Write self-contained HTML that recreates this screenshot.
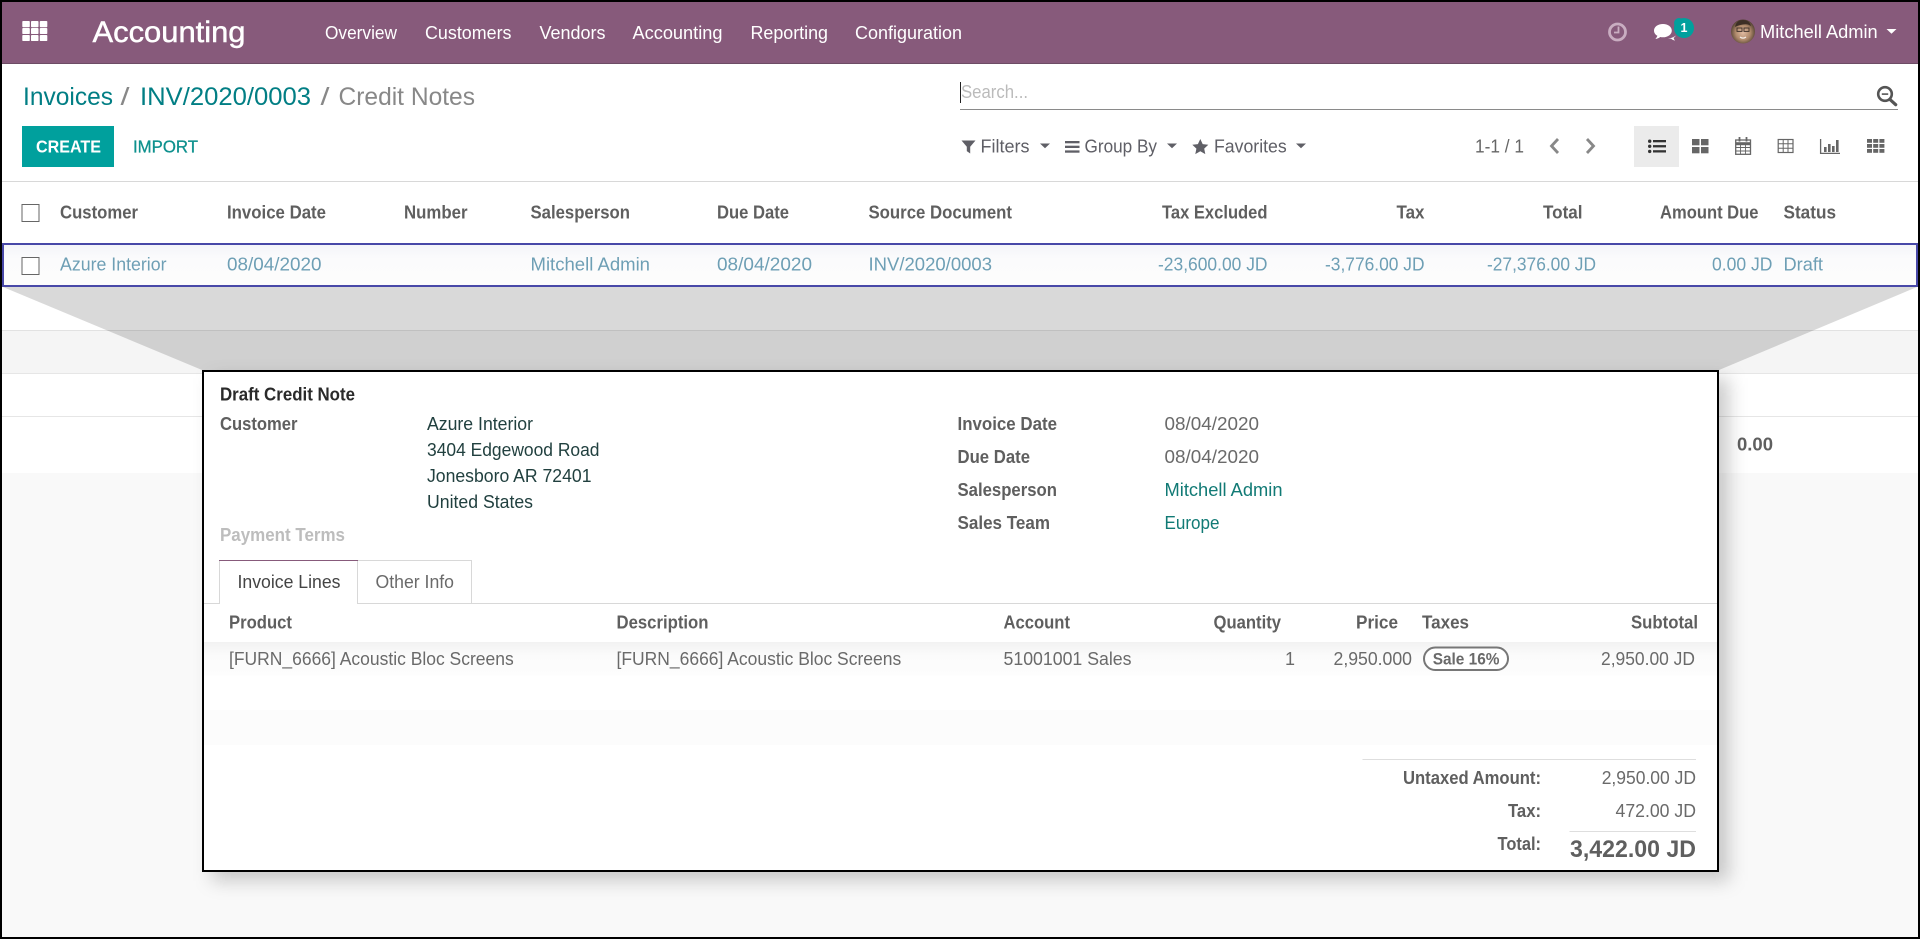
<!DOCTYPE html>
<html lang="en">
<head>
<meta charset="utf-8">
<title>Credit Notes</title>
<style>
html,body{margin:0;padding:0;width:1920px;height:939px;overflow:hidden;background:#fff}
svg{display:block;position:absolute;left:0;top:0}
text{font-family:"Liberation Sans",sans-serif;white-space:pre}
.n{font-size:18.500px;fill:#fff}
.bc{font-size:25px}
.t{fill:#017e84}
.g{fill:#888}
.h{font-size:18px;font-weight:bold;fill:#5f5f5f}
.r{font-size:18px;fill:#6e9fb5}
.l{font-size:18px;font-weight:bold;fill:#5f5f5f}
.v{font-size:18px;fill:#6a6a6a}
.d{font-size:18px;fill:#21403f}
.a{font-size:18px;fill:#117a75}
.f{font-size:18.500px;fill:#5f5f66}
</style>
</head>
<body>
<svg width="1920" height="939" viewBox="0 0 1920 939" xmlns="http://www.w3.org/2000/svg">
<defs>
<filter id="sh" x="-10%" y="-10%" width="120%" height="120%"><feGaussianBlur stdDeviation="9"/></filter>
<linearGradient id="rowg" x1="0" y1="0" x2="0" y2="1"><stop offset="0" stop-color="#f3f4f9"/><stop offset=".35" stop-color="#fbfbfc"/><stop offset="1" stop-color="#fcfcfc"/></linearGradient>
<linearGradient id="lineg" x1="0" y1="0" x2="0" y2="1"><stop offset="0" stop-color="#f2f2f2"/><stop offset=".4" stop-color="#fbfbfb"/><stop offset="1" stop-color="#fdfdfd"/></linearGradient>
<radialGradient id="av" cx=".5" cy=".55" r=".55"><stop offset="0" stop-color="#e0bba2"/><stop offset=".55" stop-color="#b08a6c"/><stop offset="1" stop-color="#4d3d2f"/></radialGradient>
</defs>

<!-- page background -->
<rect width="1920" height="939" fill="#fff"/>
<rect x="0" y="473" width="1920" height="466" fill="#f9f9f9"/>
<rect x="0" y="331" width="1920" height="42" fill="#f5f5f5"/>
<rect x="0" y="330" width="1920" height="1" fill="#e2e2e2"/>
<rect x="0" y="373" width="1920" height="1" fill="#e6e6e6"/>
<rect x="0" y="416" width="1920" height="1" fill="#e6e6e6"/>
<rect x="0" y="417" width="1920" height="56" fill="#fff"/>
<text x="1737" y="450.500" textLength="36" lengthAdjust="spacingAndGlyphs" class="l">0.00</text>

<!-- navbar -->
<rect x="0" y="2" width="1920" height="61" fill="#875a7b"/>
<rect x="0" y="63" width="1920" height="1" fill="#6d4c65"/>
<g fill="#fff">
<rect x="22.300" y="21" width="7.500" height="6.200" rx=".8"/><rect x="31" y="21" width="7.500" height="6.200" rx=".8"/><rect x="39.800" y="21" width="7.500" height="6.200" rx=".8"/>
<rect x="22.300" y="28" width="7.500" height="6" rx=".8"/><rect x="31" y="28" width="7.500" height="6" rx=".8"/><rect x="39.800" y="28" width="7.500" height="6" rx=".8"/>
<rect x="22.300" y="35" width="7.500" height="6" rx=".8"/><rect x="31" y="35" width="7.500" height="6" rx=".8"/><rect x="39.800" y="35" width="7.500" height="6" rx=".8"/>
</g>
<text x="92.500" y="42" font-size="29.500" fill="#fff" stroke="#fff" stroke-width=".45" textLength="153" lengthAdjust="spacingAndGlyphs">Accounting</text>
<text x="325" y="39" class="n" textLength="72" lengthAdjust="spacingAndGlyphs">Overview</text>
<text x="425" y="39" class="n" textLength="86.500" lengthAdjust="spacingAndGlyphs">Customers</text>
<text x="539.500" y="39" class="n" textLength="66" lengthAdjust="spacingAndGlyphs">Vendors</text>
<text x="632.500" y="39" class="n" textLength="90" lengthAdjust="spacingAndGlyphs">Accounting</text>
<text x="750.500" y="39" class="n" textLength="77.500" lengthAdjust="spacingAndGlyphs">Reporting</text>
<text x="855" y="39" class="n" textLength="107" lengthAdjust="spacingAndGlyphs">Configuration</text>
<!-- clock -->
<circle cx="1617.500" cy="32" r="8" fill="none" stroke="#c9adc1" stroke-width="2.800"/>
<path d="M1618.500 26.500v6h-4.500" fill="none" stroke="#c9adc1" stroke-width="1.800"/>
<!-- chat -->
<path d="M1663 24c-5.200 0-9 2.900-9 6.600 0 2.200 1.300 4 3.400 5.200-.4 1.300-1.200 2.400-2 3.200 1.900-.2 3.600-1 4.800-2 .9.200 1.800.3 2.800.3 5 0 8.800-3 8.800-6.700S1668 24 1663 24z" fill="#fff"/>
<path d="M1668 38.500c1 .2 2 .2 3 .1 1 .9 2.400 1.700 4 2-.7-.8-1.200-1.700-1.400-2.800 1-.6 1.800-1.400 2.300-2.300-1.800 1.500-4.800 2.800-7.900 3z" fill="#fff"/>
<circle cx="1684" cy="28" r="10" fill="#00a09d"/>
<rect x="1674" y="18" width="10" height="10" rx="5" fill="#00a09d"/>
<text x="1680.500" y="32" font-size="12.500" font-weight="bold" fill="#fff">1</text>
<!-- avatar -->
<circle cx="1743" cy="31.500" r="12" fill="url(#av)"/>
<path d="M1735 27c1-5 4-7 8-7s7 2 8 6c-3-2-5-2-8-1.500-3 .5-5 1-8 2.500z" fill="#3d2f26"/>
<rect x="1737" y="28" width="5" height="3.400" fill="none" stroke="#3a2e28" stroke-width=".9"/>
<rect x="1744" y="28" width="5" height="3.400" fill="none" stroke="#3a2e28" stroke-width=".9"/>
<path d="M1740 37c2 1.500 4 1.500 6 0" fill="none" stroke="#f5eee8" stroke-width="1.200"/>
<text x="1760" y="38" class="n" textLength="117.700" lengthAdjust="spacingAndGlyphs">Mitchell Admin</text>
<path d="M1886.500 29h10l-5 4.800z" fill="#fff"/>

<!-- breadcrumb -->
<text x="23" y="105" class="bc t" textLength="90" lengthAdjust="spacingAndGlyphs">Invoices</text>
<text x="120.500" y="105" class="bc g" textLength="9" lengthAdjust="spacingAndGlyphs">/</text>
<text x="140" y="105" class="bc t" textLength="171" lengthAdjust="spacingAndGlyphs">INV/2020/0003</text>
<text x="320.500" y="105" class="bc g" textLength="9" lengthAdjust="spacingAndGlyphs">/</text>
<text x="338.500" y="105" class="bc g" textLength="136.500" lengthAdjust="spacingAndGlyphs">Credit Notes</text>

<!-- search -->
<rect x="960" y="82" width="1" height="21" fill="#222"/>
<text x="961" y="98" font-size="18" fill="#bbb" textLength="67" lengthAdjust="spacingAndGlyphs">Search...</text>
<rect x="960" y="109" width="938" height="1" fill="#8a8a8a"/>
<circle cx="1885" cy="94" r="6.800" fill="none" stroke="#555" stroke-width="2.600"/>
<path d="M1890 99.500l5.700 5.200" stroke="#555" stroke-width="3.200" stroke-linecap="round"/>
<rect x="1881.800" y="93.300" width="6.400" height="1.600" fill="#555"/>

<!-- buttons -->
<rect x="22" y="126" width="92" height="41" fill="#00a09d"/>
<text x="36" y="152.500" font-size="17.500" font-weight="bold" fill="#fff" textLength="65" lengthAdjust="spacingAndGlyphs">CREATE</text>
<text x="133" y="152.500" font-size="17.500" fill="#0f918e" stroke="#0f918e" stroke-width=".3" textLength="65" lengthAdjust="spacingAndGlyphs">IMPORT</text>

<!-- filter bar -->
<path d="M961.500 140.500h14l-5.300 6.300v6.700l-3.400-2.400v-4.300z" fill="#5f5f66"/>
<text x="980.500" y="152.700" class="f" textLength="49" lengthAdjust="spacingAndGlyphs">Filters</text>
<path d="M1040 143.500h10l-5 4.800z" fill="#5f5f66"/>
<g fill="#5f5f66"><rect x="1065" y="141" width="14.500" height="2.300"/><rect x="1065" y="145.700" width="14.500" height="2.300"/><rect x="1065" y="150.400" width="14.500" height="2.300"/></g>
<text x="1084.500" y="152.700" class="f" textLength="72.500" lengthAdjust="spacingAndGlyphs">Group By</text>
<path d="M1167 143.500h10l-5 4.800z" fill="#5f5f66"/>
<path d="M1200.300 139l2.400 5.100 5.600.7-4.100 3.800 1.100 5.500-5-2.800-5 2.800 1.100-5.500-4.100-3.800 5.600-.7z" fill="#5f5f66"/>
<text x="1214" y="152.700" class="f" textLength="72.700" lengthAdjust="spacingAndGlyphs">Favorites</text>
<path d="M1296 143.500h10l-5 4.800z" fill="#5f5f66"/>

<!-- pager -->
<text x="1475" y="152.700" font-size="18" fill="#666" textLength="49" lengthAdjust="spacingAndGlyphs">1-1 / 1</text>
<path d="M1558 139l-6.500 7 6.500 7" fill="none" stroke="#888" stroke-width="2.800"/>
<path d="M1587 139l6.500 7-6.500 7" fill="none" stroke="#888" stroke-width="2.800"/>

<!-- view switcher -->
<rect x="1634" y="126" width="45" height="41" fill="#ebebeb"/>
<g fill="#333"><rect x="1648" y="139.500" width="3.400" height="3.400" rx="1.700"/><rect x="1648" y="144.600" width="3.400" height="3.400" rx="1.700"/><rect x="1648" y="149.700" width="3.400" height="3.400" rx="1.700"/><rect x="1653" y="140" width="13" height="2.300"/><rect x="1653" y="145.100" width="13" height="2.300"/><rect x="1653" y="150.200" width="13" height="2.300"/></g>
<g fill="#666"><rect x="1692" y="139" width="7.500" height="6.300"/><rect x="1701" y="139" width="7.500" height="6.300"/><rect x="1692" y="147" width="7.500" height="6.300"/><rect x="1701" y="147" width="7.500" height="6.300"/></g>
<g fill="none" stroke="#666">
<rect x="1735.700" y="140" width="14.800" height="14.300" stroke-width="1.300"/>
<path d="M1735.700 143.700h14.800" stroke-width="3"/>
<path d="M1735.700 147.500h14.800M1735.700 151h14.800M1740.500 145v9.300M1745.500 145v9.300" stroke-width=".9"/>
<path d="M1739.500 137v4.500M1746.500 137v4.500" stroke-width="1.800"/>
<rect x="1778.200" y="139.500" width="14.800" height="13" stroke-width="1.200"/>
<path d="M1778.200 143.800h14.800M1778.200 148.200h14.800M1783.200 139.500v13M1788 139.500v13" stroke-width="1"/>
<path d="M1820.600 139v14.400h19.400" stroke-width="1.300"/>
</g>
<g fill="#666"><rect x="1824" y="147" width="2.600" height="5"/><rect x="1828" y="144" width="2.600" height="8"/><rect x="1832" y="146" width="2.600" height="6"/><rect x="1836" y="140" width="2.600" height="12"/></g>
<g fill="#666"><rect x="1867" y="139" width="5" height="3.800"/><rect x="1873.200" y="139" width="5" height="3.800"/><rect x="1879.400" y="139" width="5" height="3.800"/><rect x="1867" y="144" width="5" height="3.800"/><rect x="1873.200" y="144" width="5" height="3.800"/><rect x="1879.400" y="144" width="5" height="3.800"/><rect x="1867" y="149" width="5" height="3.800"/><rect x="1873.200" y="149" width="5" height="3.800"/><rect x="1879.400" y="149" width="5" height="3.800"/></g>

<!-- list header -->
<rect x="0" y="181" width="1920" height="1" fill="#d8d8d8"/>
<rect x="22" y="204.500" width="17" height="17" fill="#fff" stroke="#666" stroke-width="1"/>
<text x="60" y="218.500" class="h" textLength="78" lengthAdjust="spacingAndGlyphs">Customer</text>
<text x="227" y="218.500" class="h" textLength="99" lengthAdjust="spacingAndGlyphs">Invoice Date</text>
<text x="404" y="218.500" class="h" textLength="63.500" lengthAdjust="spacingAndGlyphs">Number</text>
<text x="530.500" y="218.500" class="h" textLength="99.500" lengthAdjust="spacingAndGlyphs">Salesperson</text>
<text x="717" y="218.500" class="h" textLength="72" lengthAdjust="spacingAndGlyphs">Due Date</text>
<text x="868.500" y="218.500" class="h" textLength="143.500" lengthAdjust="spacingAndGlyphs">Source Document</text>
<text x="1162" y="218.500" class="h" textLength="105.500" lengthAdjust="spacingAndGlyphs">Tax Excluded</text>
<text x="1396.500" y="218.500" class="h" textLength="28" lengthAdjust="spacingAndGlyphs">Tax</text>
<text x="1543" y="218.500" class="h" textLength="39.500" lengthAdjust="spacingAndGlyphs">Total</text>
<text x="1660" y="218.500" class="h" textLength="98.500" lengthAdjust="spacingAndGlyphs">Amount Due</text>
<text x="1783.500" y="218.500" class="h" textLength="52.500" lengthAdjust="spacingAndGlyphs">Status</text>

<!-- selected row -->
<rect x="3" y="244" width="1914" height="42" fill="url(#rowg)" stroke="#4848a8" stroke-width="2"/>
<rect x="22" y="257.500" width="17" height="17" fill="#fff" stroke="#666" stroke-width="1"/>
<text x="60" y="270.500" class="r" textLength="106.500" lengthAdjust="spacingAndGlyphs">Azure Interior</text>
<text x="227" y="270.500" class="r" textLength="94.500" lengthAdjust="spacingAndGlyphs">08/04/2020</text>
<text x="530.500" y="270.500" class="r" textLength="119.500" lengthAdjust="spacingAndGlyphs">Mitchell Admin</text>
<text x="717" y="270.500" class="r" textLength="95" lengthAdjust="spacingAndGlyphs">08/04/2020</text>
<text x="868.500" y="270.500" class="r" textLength="123.500" lengthAdjust="spacingAndGlyphs">INV/2020/0003</text>
<text x="1158" y="270.500" class="r" textLength="109.500" lengthAdjust="spacingAndGlyphs">-23,600.00 JD</text>
<text x="1325" y="270.500" class="r" textLength="99.500" lengthAdjust="spacingAndGlyphs">-3,776.00 JD</text>
<text x="1487" y="270.500" class="r" textLength="109" lengthAdjust="spacingAndGlyphs">-27,376.00 JD</text>
<text x="1712" y="270.500" class="r" textLength="60.500" lengthAdjust="spacingAndGlyphs">0.00 JD</text>
<text x="1783.500" y="270.500" class="r" textLength="39.500" lengthAdjust="spacingAndGlyphs">Draft</text>

<!-- zoom trapezoid -->
<polygon points="3,287 1917,287 1719,370 202,370" fill="#000" fill-opacity=".15"/>

<!-- popup shadow -->
<rect x="212" y="378" width="1517" height="503" fill="#000" fill-opacity=".2" filter="url(#sh)"/>

<!-- popup -->
<rect x="203" y="371" width="1515" height="500" fill="#fff" stroke="#000" stroke-width="2"/>
<text x="220" y="400.500" font-size="18" font-weight="bold" fill="#2a2a2a" textLength="135" lengthAdjust="spacingAndGlyphs">Draft Credit Note</text>
<text x="220" y="430" class="l" textLength="77.500" lengthAdjust="spacingAndGlyphs">Customer</text>
<text x="427" y="430" class="d" textLength="106" lengthAdjust="spacingAndGlyphs">Azure Interior</text>
<text x="427" y="456" class="d" textLength="172.500" lengthAdjust="spacingAndGlyphs">3404 Edgewood Road</text>
<text x="427" y="482" class="d" textLength="164.500" lengthAdjust="spacingAndGlyphs">Jonesboro AR 72401</text>
<text x="427" y="508" class="d" textLength="106" lengthAdjust="spacingAndGlyphs">United States</text>
<text x="220" y="541" font-size="18" font-weight="bold" fill="#bdbdbd" textLength="125" lengthAdjust="spacingAndGlyphs">Payment Terms</text>

<text x="957.500" y="430" class="l" textLength="99.500" lengthAdjust="spacingAndGlyphs">Invoice Date</text>
<text x="957.500" y="463" class="l" textLength="72.500" lengthAdjust="spacingAndGlyphs">Due Date</text>
<text x="957.500" y="496" class="l" textLength="99.500" lengthAdjust="spacingAndGlyphs">Salesperson</text>
<text x="957.500" y="529" class="l" textLength="92.500" lengthAdjust="spacingAndGlyphs">Sales Team</text>
<text x="1164.500" y="430" class="v" textLength="94.500" lengthAdjust="spacingAndGlyphs">08/04/2020</text>
<text x="1164.500" y="463" class="v" textLength="94.500" lengthAdjust="spacingAndGlyphs">08/04/2020</text>
<text x="1164.500" y="496" class="a" textLength="118" lengthAdjust="spacingAndGlyphs">Mitchell Admin</text>
<text x="1164.500" y="529" class="a" textLength="55" lengthAdjust="spacingAndGlyphs">Europe</text>

<!-- tabs -->
<rect x="204" y="603" width="1513" height="1" fill="#d8d8d8"/>
<path d="M357.500 604V560.500H471.500V603" fill="none" stroke="#d8d8d8" stroke-width="1"/>
<rect x="219" y="560" width="138.500" height="45" fill="#fff"/>
<path d="M219.500 604V560.500H357.500V604" fill="none" stroke="#d8d8d8" stroke-width="1"/>
<rect x="219" y="560" width="139" height="1" fill="#875a7b"/>
<text x="237.500" y="588" font-size="18" fill="#444" textLength="103" lengthAdjust="spacingAndGlyphs">Invoice Lines</text>
<text x="375.500" y="588" font-size="18" fill="#6a6a6a" textLength="78.500" lengthAdjust="spacingAndGlyphs">Other Info</text>

<!-- invoice lines -->
<text x="229" y="628.500" class="l" textLength="63" lengthAdjust="spacingAndGlyphs">Product</text>
<text x="616.500" y="628.500" class="l" textLength="92" lengthAdjust="spacingAndGlyphs">Description</text>
<text x="1003.500" y="628.500" class="l" textLength="66.500" lengthAdjust="spacingAndGlyphs">Account</text>
<text x="1213.500" y="628.500" class="l" textLength="67.500" lengthAdjust="spacingAndGlyphs">Quantity</text>
<text x="1356" y="628.500" class="l" textLength="42" lengthAdjust="spacingAndGlyphs">Price</text>
<text x="1422" y="628.500" class="l" textLength="47" lengthAdjust="spacingAndGlyphs">Taxes</text>
<text x="1631" y="628.500" class="l" textLength="67" lengthAdjust="spacingAndGlyphs">Subtotal</text>

<rect x="204" y="642" width="1513" height="33.500" fill="url(#lineg)"/>
<rect x="204" y="710" width="1513" height="35" fill="#fcfcfc"/>
<text x="229" y="665" class="v" textLength="284.700" lengthAdjust="spacingAndGlyphs">[FURN_6666] Acoustic Bloc Screens</text>
<text x="616.500" y="665" class="v" textLength="284.700" lengthAdjust="spacingAndGlyphs">[FURN_6666] Acoustic Bloc Screens</text>
<text x="1003.500" y="665" class="v" textLength="128" lengthAdjust="spacingAndGlyphs">51001001 Sales</text>
<text x="1285" y="665" class="v">1</text>
<text x="1333.500" y="665" class="v" textLength="78.500" lengthAdjust="spacingAndGlyphs">2,950.000</text>
<rect x="1424" y="647.500" width="84" height="22.500" rx="11.250" fill="#fff" stroke="#777" stroke-width="2"/>
<text x="1432.700" y="664.500" font-size="17" font-weight="bold" fill="#6a6a6a" textLength="66.800" lengthAdjust="spacingAndGlyphs">Sale 16%</text>
<text x="1601" y="665" class="v" textLength="94" lengthAdjust="spacingAndGlyphs">2,950.00 JD</text>

<!-- totals -->
<rect x="1362.500" y="759" width="333.500" height="1" fill="#dedede"/>
<text x="1403" y="784" class="l" textLength="138" lengthAdjust="spacingAndGlyphs">Untaxed Amount:</text>
<text x="1601.700" y="784" class="v" textLength="94.300" lengthAdjust="spacingAndGlyphs">2,950.00 JD</text>
<text x="1508" y="817" class="l" textLength="33" lengthAdjust="spacingAndGlyphs">Tax:</text>
<text x="1615.500" y="817" class="v" textLength="80.500" lengthAdjust="spacingAndGlyphs">472.00 JD</text>
<rect x="1569.500" y="831" width="126.500" height="1" fill="#dedede"/>
<text x="1497.500" y="850" class="l" textLength="43.500" lengthAdjust="spacingAndGlyphs">Total:</text>
<text x="1570" y="857" font-size="24.500" font-weight="bold" fill="#5f5f5f" textLength="126" lengthAdjust="spacingAndGlyphs">3,422.00 JD</text>

<!-- screenshot frame -->
<rect x="0" y="0" width="1920" height="2" fill="#000"/>
<rect x="0" y="937" width="1920" height="2" fill="#000"/>
<rect x="0" y="0" width="2" height="939" fill="#000"/>
<rect x="1918" y="0" width="2" height="939" fill="#000"/>
</svg>
</body>
</html>
